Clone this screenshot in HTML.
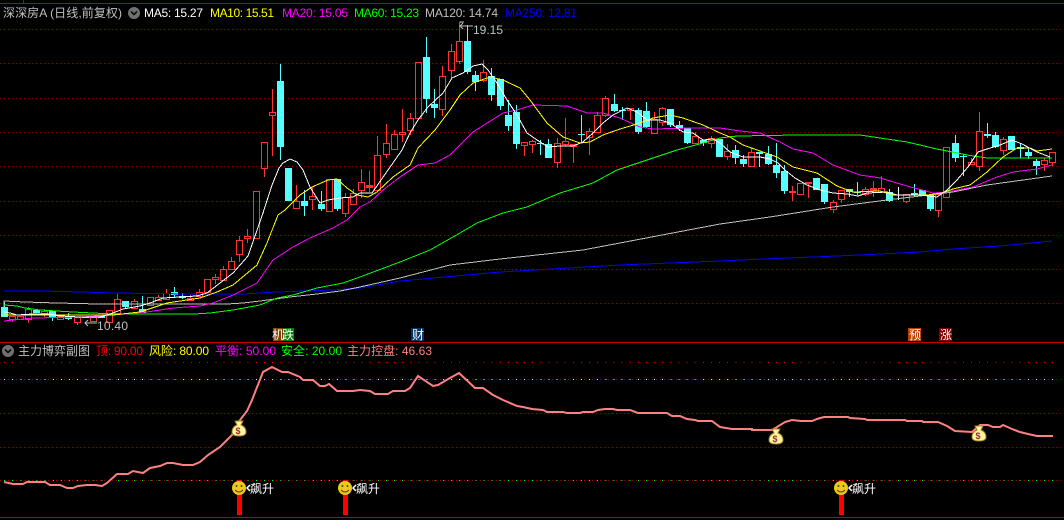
<!DOCTYPE html>
<html><head><meta charset="utf-8"><style>
html,body{margin:0;padding:0;background:#000;width:1064px;height:520px;overflow:hidden}
svg{display:block;position:absolute;left:0;top:0}
text{font-family:"Liberation Sans","WenQuanYi Zen Hei","Noto Sans CJK SC",sans-serif;font-size:12px}
.b{font-size:12px;fill:#fff}
</style></head><body>
<svg width="1064" height="520" viewBox="0 0 1064 520" xmlns="http://www.w3.org/2000/svg">
<rect width="1064" height="520" fill="#000"/>
<g stroke="#c00000" stroke-width="1" shape-rendering="crispEdges" fill="none">
<path d="M0 3.5H1064M23.5 0V3M0 342.5H1064M0 517.5H1064"/>
</g>
<g stroke="#900000" stroke-width="1" stroke-dasharray="1 3" shape-rendering="crispEdges" fill="none">
<path d="M0 29.5H1064M0 63.5H1064M0 98.5H1064M0 132.5H1064M0 166.5H1064M0 201.5H1064M0 235.5H1064M0 269.5H1064M0 303.5H1064M0 379.5H1064M0 413.5H1064M0 447.5H1064M0 480.5H1064"/>
</g>
<g stroke-width="1" stroke-dasharray="1 7.125" shape-rendering="crispEdges" fill="none">
<path d="M4 362.5H1053" stroke="#f00000"/>
<path d="M4 379.5H1053" stroke="#ffff40"/>
<path d="M4 480.5H1053" stroke="#00ff00"/>
</g>
<g shape-rendering="crispEdges">
<path fill="#55ffff" d="M1 307h7v10h-7zM33 310h7v3h-7zM49 311h7v7h-7zM65 317h7v2h-7zM82 317h7v1h-7zM98 316h7v2h-7zM122 301h7v6h-7zM139 309h7v4h-7zM171 292h7v3h-7zM179 296h7v2h-7zM277 81h7v66h-7zM285 168h7v33h-7zM301 201h7v5h-7zM318 204h7v5h-7zM334 179h7v30h-7zM423 57h7v42h-7zM431 104h7v4h-7zM464 41h7v31h-7zM472 75h7v7h-7zM488 76h7v19h-7zM497 79h7v27h-7zM505 115h7v11h-7zM513 112h7v32h-7zM537 143h7v1h-7zM545 144h7v14h-7zM578 134h7v1h-7zM611 104h7v7h-7zM619 110h7v1h-7zM635 110h7v22h-7zM643 111h7v16h-7zM667 109h7v16h-7zM676 125h7v3h-7zM684 128h7v15h-7zM700 140h7v3h-7zM716 139h7v18h-7zM732 150h7v8h-7zM740 159h7v5h-7zM756 152h7v2h-7zM765 154h7v10h-7zM773 165h7v8h-7zM781 171h7v20h-7zM813 178h7v12h-7zM821 184h7v18h-7zM846 189h7v3h-7zM854 192h7v1h-7zM886 192h7v9h-7zM911 193h7v2h-7zM919 190h7v5h-7zM927 195h7v14h-7zM952 143h7v15h-7zM960 156h7v1h-7zM984 134h7v2h-7zM992 135h7v12h-7zM1008 136h7v14h-7zM1017 147h7v2h-7zM1025 152h7v4h-7zM1033 161h7v5h-7z"/>
<path stroke="#55ffff" stroke-width="1" fill="none" d="M4.5 302V317M52.5 311V321M68.5 313V320M125.5 301V308M142.5 296V313M174.5 287V298M182.5 293V299M280.5 64V160M304.5 190V216M321.5 191V211M337.5 179V211M426.5 37V113M434.5 89V118M467.5 25V74M475.5 71V91M491.5 68V101M500.5 79V110M508.5 100V131M516.5 105V149M540.5 140V155M548.5 139V158M581.5 115V143M614.5 94V112M622.5 107V120M638.5 108V134M646.5 102V128M670.5 109V127M679.5 121V131M687.5 128V144M703.5 140V146M735.5 145V164M743.5 155V167M759.5 152V167M768.5 146V165M776.5 143V178M784.5 165V194M824.5 184V204M849.5 189V197M857.5 182V195M889.5 189V202M914.5 184V197M930.5 195V211M955.5 135V162M963.5 154V176M987.5 123V138M995.5 132V148M1020.5 143V158M1028.5 148V159M1036.5 159V175"/>
<path stroke="#ff3232" stroke-width="1" fill="none" d="M9.5 316.5h6v3h-6zM12.5 320V322M17.5 316.5h6v3h-6zM25.5 309.5h6v10h-6zM28.5 307v2M28.5 320v3M41.5 311.5h6v2h-6zM44.5 309v2M44.5 314v3M57.5 316.5h6v3h-6zM74.5 317.5h6v5h-6zM77.5 323v2M90.5 317.5h6v4h-6zM106.5 310.5h6v12h-6zM114.5 299.5h6v14h-6zM117.5 294v5M131.5 301.5h6v7h-6zM134.5 299v2M147.5 297.5h6v8h-6zM155.5 297.5h6v3h-6zM158.5 295v2M163.5 293.5h6v6h-6zM166.5 289v4M187.5 298.5h6v2h-6zM190.5 295v3M196.5 292.5h6v4h-6zM199.5 289v3M204.5 279.5h6v13h-6zM212.5 277.5h6v2h-6zM215.5 274v3M215.5 280v4M220.5 269.5h6v11h-6zM223.5 266v3M228.5 261.5h6v8h-6zM231.5 257v4M236.5 240.5h6v14h-6zM239.5 236v4M239.5 255v7M244.5 236.5h6v2h-6zM247.5 229v7M247.5 239v4M253.5 191.5h6v47h-6zM261.5 142.5h6v26h-6zM264.5 169v8M269.5 112.5h6v3h-6zM272.5 89v23M272.5 116v40M293.5 201.5h6v7h-6zM296.5 185v16M309.5 196.5h6v3h-6zM312.5 187v9M312.5 200v10M326.5 179.5h6v32h-6zM342.5 197.5h6v16h-6zM345.5 193v4M345.5 214v3M350.5 193.5h6v11h-6zM353.5 189v4M358.5 182.5h6v8h-6zM361.5 169v13M361.5 191v7M366.5 185.5h6v2h-6zM369.5 171v14M369.5 188v4M374.5 155.5h6v35h-6zM377.5 136v19M383.5 143.5h6v11h-6zM386.5 124v19M386.5 155v3M391.5 134.5h6v15h-6zM394.5 130v4M399.5 132.5h6v2h-6zM402.5 109v23M402.5 135v7M407.5 118.5h6v12h-6zM410.5 113v5M410.5 131v4M415.5 62.5h6v56h-6zM439.5 76.5h6v33h-6zM442.5 66v10M442.5 110v6M448.5 51.5h6v19h-6zM451.5 44v7M451.5 71v8M456.5 41.5h6v20h-6zM459.5 23v18M459.5 62v2M480.5 72.5h6v8h-6zM483.5 60v12M483.5 81v1M521.5 142.5h6v3h-6zM524.5 146v10M529.5 141.5h6v3h-6zM532.5 140v1M532.5 145v8M554.5 143.5h6v19h-6zM557.5 138v5M557.5 163v5M562.5 141.5h6v3h-6zM565.5 118v23M565.5 145v1M570.5 144.5h6v2h-6zM573.5 147v16M586.5 131.5h6v6h-6zM589.5 128v3M589.5 138v17M594.5 115.5h6v17h-6zM597.5 112v3M602.5 98.5h6v17h-6zM605.5 96v2M605.5 116v1M627.5 108.5h6v2h-6zM630.5 111v9M651.5 119.5h6v14h-6zM654.5 112v7M659.5 108.5h6v14h-6zM662.5 107v1M662.5 123v3M692.5 136.5h6v7h-6zM695.5 132v4M708.5 138.5h6v5h-6zM711.5 136v2M711.5 144v4M724.5 151.5h6v5h-6zM727.5 144v7M727.5 157v3M748.5 152.5h6v14h-6zM751.5 148v4M789.5 191.5h6v1h-6zM792.5 186v5M792.5 193v8M797.5 183.5h6v11h-6zM805.5 182.5h6v1h-6zM808.5 184v14M830.5 202.5h6v7h-6zM833.5 200v2M833.5 210v3M838.5 190.5h6v9h-6zM841.5 200v3M862.5 189.5h6v5h-6zM865.5 187v2M865.5 195v1M870.5 188.5h6v2h-6zM873.5 181v7M873.5 191v6M878.5 188.5h6v4h-6zM881.5 176v12M903.5 194.5h6v7h-6zM906.5 202v1M935.5 194.5h6v16h-6zM938.5 193v1M938.5 211v6M943.5 147.5h6v50h-6zM968.5 162.5h6v2h-6zM971.5 158v4M976.5 131.5h6v35h-6zM979.5 112v19M979.5 167v4M1000.5 139.5h6v11h-6zM1003.5 137v2M1003.5 151v4M1041.5 160.5h6v4h-6zM1044.5 158v2M1044.5 165v6M1049.5 152.5h6v10h-6zM1052.5 163v3"/>
<path stroke="#fff" fill="none" d="M898.5 187V200"/>
<path fill="#ff3232" d="M366 185h7v3h-7zM570 144h7v3h-7zM805 182h7v2h-7zM870 188h7v3h-7z"/>
</g>
<g fill="none" stroke-width="1" shape-rendering="crispEdges">
<polyline stroke="#0000ff" points="4,291 40,291 82,292 113,293 193,294 243,294 277,292 333,290 360,288 400,281 500,272 620,265 720,261 763,259 813,257 860,255 920,252 953,249 1000,246 1052,241"/>
<polyline stroke="#c0c0c0" points="4,307 4,301 25,302 57,303 98,304 113,304 227,304 243,303 260,301 290,297 317,294 340,291 360,287 400,278 450,265 500,259 583,250 720,224 770,217 833,207 887,200 953,192 987,185 1052,176"/>
<polyline stroke="#00ff00" points="4,305 17,306 25,308 40,310 73,312 113,314 195,314 210,313 233,310 260,305 277,298 293,295 317,288 343,283 360,277 400,262 430,250 460,233 477,223 503,213 527,207 560,193 593,183 617,170 653,158 677,150 703,143 720,138 737,136 797,135 860,135 880,138 907,142 937,149 967,155 987,158 1017,158 1052,158"/>
<polyline stroke="#ff00ff" points="4,321 33,318 83,317 113,315 147,312 173,308 200,306 213,303 233,295 257,283 273,260 293,247 310,238 333,228 347,220 360,207 370,202 383,190 400,177 418,165 435,163 450,155 473,132 503,113 517,110 533,105 567,106 587,113 603,113 620,118 640,127 653,129 693,128 720,128 740,131 760,133 780,142 793,149 813,153 833,165 860,175 880,178 907,186 933,193 947,192 973,187 997,177 1013,172 1037,169 1052,165"/>
<polyline stroke="#ffff00" points="4,315 67,315 113,315 140,312 167,303 200,298 217,292 233,285 257,265 267,243 278,215 285,210 300,195 312,187 328,180 337,179 347,188 357,195 368,197 377,192 393,177 410,165 418,148 435,130 450,110 460,95 473,83 490,77 503,80 520,88 530,100 547,123 563,137 580,143 590,142 603,135 620,129 637,124 653,118 670,115 683,118 703,125 720,133 730,137 743,145 760,151 777,157 793,167 817,173 837,186 853,192 880,191 893,195 927,195 942,193 953,189 970,185 987,172 1003,157 1017,148 1030,148 1037,151 1052,149"/>
<polyline stroke="#ffffff" points="4,312 10,313 17,315 33,314 47,314 55,315 60,316 80,317 100,317 113,313 123,309 140,306 150,303 163,298 180,297 197,296 207,293 220,283 233,273 248,256 263,213 272,185 279,168 283,163 290,159 297,162 303,170 310,187 320,203 328,200 340,198 353,197 360,193 372,193 388,170 402,150 410,133 418,120 428,107 443,93 452,78 463,73 473,66 482,64 488,70 497,83 507,100 517,115 527,133 537,140 548,147 560,146 573,146 583,142 593,133 603,123 613,115 627,108 637,112 647,120 660,120 670,123 683,132 693,133 703,140 713,139 720,143 730,152 743,157 760,157 770,159 778,163 785,170 795,178 807,185 820,190 833,193 847,194 858,196 867,193 887,192 897,195 920,195 937,197 947,190 957,180 968,167 978,152 987,149 1000,145 1012,140 1022,144 1037,152 1050,157"/>
</g>
<polyline fill="none" stroke="#ff8080" stroke-width="2" points="4,482 13,484 23,484 27,482 45,482 50,485 60,485 67,488 73,488 78,486 87,485 95,485 102,486 107,483 117,474 128,474 133,471 143,473 150,468 160,466 167,463 173,463 183,465 193,465 200,462 208,455 220,447 232,435 240,420 247,411 252,400 263,372 272,367 282,372 288,372 300,377 303,380 313,380 320,386 325,386 329,384 337,391 353,391 360,390 370,391 375,394 388,394 393,391 405,391 410,388 418,376 433,386 438,385 450,378 459,373 475,388 483,388 493,395 503,400 517,406 523,407 532,409 543,410 547,412 563,412 567,413 580,413 583,412 593,412 598,410 605,409 613,409 617,410 630,410 638,413 667,413 672,416 680,416 687,419 695,420 698,421 712,421 720,427 732,429 752,429 752,430 772,430 777,427 785,422 792,420 801,421 812,421 817,419 824,417 848,417 850,418 865,419 867,420 905,420 907,421 922,421 923,422 938,422 947,426 955,431 972,432 980,425 988,425 993,427 1000,427 1003,425 1012,429 1020,432 1028,434 1037,436 1053,436"/>
<g fill="#ff0000" shape-rendering="crispEdges">
<rect x="237" y="480" width="5" height="35"/><rect x="343" y="480" width="5" height="35"/><rect x="839" y="480" width="5" height="35"/>
</g>
<g><circle cx="239" cy="488" r="7" fill="#ecc820"/><circle cx="236.5" cy="486" r="1" fill="#604000"/><circle cx="241.5" cy="486" r="1" fill="#604000"/><path d="M235 490q4 4 8 0" fill="none" stroke="#604000"/><path d="M250 485l-3 3 3 3" fill="none" stroke="#fff" stroke-width="1.5"/></g>
<g transform="translate(106 0)"><circle cx="239" cy="488" r="7" fill="#ecc820"/><circle cx="236.5" cy="486" r="1" fill="#604000"/><circle cx="241.5" cy="486" r="1" fill="#604000"/><path d="M235 490q4 4 8 0" fill="none" stroke="#604000"/><path d="M250 485l-3 3 3 3" fill="none" stroke="#fff" stroke-width="1.5"/></g>
<g transform="translate(602 0)"><circle cx="239" cy="488" r="7" fill="#ecc820"/><circle cx="236.5" cy="486" r="1" fill="#604000"/><circle cx="241.5" cy="486" r="1" fill="#604000"/><path d="M235 490q4 4 8 0" fill="none" stroke="#604000"/><path d="M250 485l-3 3 3 3" fill="none" stroke="#fff" stroke-width="1.5"/></g>
<text x="250" y="493" class="b">飙升</text><text x="356" y="493" class="b">飙升</text><text x="852" y="493" class="b">飙升</text>
<g><path d="M235 421h8l-2 4q5 2 5 7 0 4 -7 4 -7 0 -7 -4 0 -5 5 -7z" fill="#fff4a0" stroke="#a88020"/><text x="235.5" y="434" style="font-size:9px;font-weight:bold" fill="#903030">$</text></g>
<g transform="translate(537 8)"><path d="M235 421h8l-2 4q5 2 5 7 0 4 -7 4 -7 0 -7 -4 0 -5 5 -7z" fill="#fff4a0" stroke="#a88020"/><text x="235.5" y="434" style="font-size:9px;font-weight:bold" fill="#903030">$</text></g>
<g transform="translate(740 5)"><path d="M235 421h8l-2 4q5 2 5 7 0 4 -7 4 -7 0 -7 -4 0 -5 5 -7z" fill="#fff4a0" stroke="#a88020"/><text x="235.5" y="434" style="font-size:9px;font-weight:bold" fill="#903030">$</text></g>
<g shape-rendering="crispEdges">
<rect x="273" y="328" width="11" height="13" fill="#804000"/><rect x="283" y="328" width="11" height="13" fill="#008000"/>
<rect x="411" y="328" width="13" height="13" fill="#003366"/><rect x="908" y="328" width="13" height="13" fill="#c04000"/><rect x="939" y="328" width="13" height="13" fill="#800000"/>
</g>
<g fill="#fff">
<text x="272" y="339" class="b">机</text><text x="282" y="339" class="b">跌</text><text x="412" y="339" class="b">财</text><text x="909" y="339" class="b">预</text><text x="940" y="339" class="b">涨</text>
</g>
<text x="3" y="17" fill="#c0c0c0" textLength="119" lengthAdjust="spacing">深深房A (日线,前复权)</text>
<circle cx="134" cy="13" r="6" fill="#707070"/><path d="M131 11.5l3 3 3-3" fill="none" stroke="#000" stroke-width="1.5"/>
<text x="144" y="17" fill="#fff" textLength="59" lengthAdjust="spacing">MA5: 15.27</text>
<text x="210" y="17" fill="#ffff00" textLength="64" lengthAdjust="spacing">MA10: 15.51</text>
<text x="282" y="17" fill="#ff00ff" textLength="66" lengthAdjust="spacing">MA20: 15.05</text>
<text x="354" y="17" fill="#00ff00" textLength="65" lengthAdjust="spacing">MA60: 15.23</text>
<text x="425" y="17" fill="#c0c0c0" textLength="73" lengthAdjust="spacing">MA120: 14.74</text>
<text x="505" y="17" fill="#0000ff" textLength="72" lengthAdjust="spacing">MA250: 12.81</text>
<circle cx="8" cy="351" r="6" fill="#707070"/><path d="M5 349.5l3 3 3-3" fill="none" stroke="#000" stroke-width="1.5"/>
<text x="18" y="355" fill="#c0c0c0">主力博弈副图</text>
<text x="96" y="355" fill="#ff0000" textLength="47" lengthAdjust="spacing">顶: 90.00</text>
<text x="149" y="355" fill="#ffff00" textLength="60" lengthAdjust="spacing">风险: 80.00</text>
<text x="215" y="355" fill="#ff00ff" textLength="61" lengthAdjust="spacing">平衡: 50.00</text>
<text x="281" y="355" fill="#00ff00" textLength="61" lengthAdjust="spacing">安全: 20.00</text>
<text x="347" y="355" fill="#ff8080" textLength="85" lengthAdjust="spacing">主力控盘: 46.63</text>
<path d="M460 26h13M463 23l-3 3 3 3M460 23v-1h4" fill="none" stroke="#c0c0c0"/>
<text x="473" y="34" fill="#c0c0c0" textLength="30" lengthAdjust="spacing">19.15</text>
<path d="M85 323h12M88 320l-3 3 3 3" fill="none" stroke="#c0c0c0"/>
<text x="97" y="330" fill="#c0c0c0" textLength="31" lengthAdjust="spacing">10.40</text>
</svg>
</body></html>
